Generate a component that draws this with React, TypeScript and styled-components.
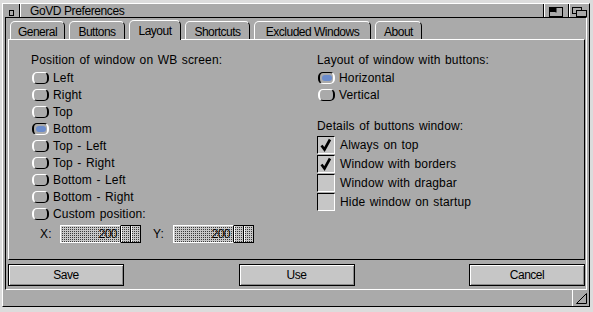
import React from "react";
import styled, { createGlobalStyle } from "styled-components";

const GlobalStyle = createGlobalStyle`
  html, body {
    margin: 0;
    padding: 0;
    background: #dcdcdc;
  }
  body {
    font-family: "Liberation Sans", Arial, sans-serif;
    font-size: 12px;
    color: #000;
  }
  #root {
    width: 593px;
    height: 312px;
    overflow: hidden;
  }
`;

const GRAY = "#aaaaaa";
const dots = `
  background-color: #c8c8c8;
  background-image: conic-gradient(from 90deg at 1px 1px, #3a3a3a 90deg, transparent 0);
  background-size: 2px 2px;
`;

const Screen = styled.div`
  width: 593px;
  height: 312px;
  padding: 3px 0 0 2px;
  box-sizing: border-box;
`;

const Window = styled.div`
  width: 588px;
  height: 304px;
  box-sizing: border-box;
  background: ${GRAY};
  border-style: solid;
  border-width: 1px;
  border-color: #fff #000 #000 #fff;
  display: flex;
  flex-direction: column;
`;

const TitleBar = styled.div`
  height: 13px;
  display: flex;
  align-items: stretch;
`;

const CloseGadget = styled.div`
  width: 17px;
  border-right: 1px solid #000;
  box-shadow: 1px 0 0 #fff;
  display: flex;
  align-items: center;
  justify-content: center;
  padding-top: 4px;
  box-sizing: border-box;
`;

const CloseIcon = styled.div`
  width: 5px;
  height: 6px;
  border: 1px solid #000;
  box-sizing: border-box;
`;

const Title = styled.div`
  flex: 1;
  padding-left: 10px;
  font-size: 12px;
  letter-spacing: -0.4px;
  line-height: 14px;
`;

const Gadget = styled.div<{ $w: number }>`
  width: ${(p) => p.$w}px;
  border-left: 1px solid #000;
  box-shadow: inset 1px 0 0 #fff;
  display: flex;
  align-items: center;
  justify-content: center;
  padding-top: 3px;
`;

const Frame = styled.div`
  margin-left: 2px;
  width: 582px;
  height: 273px;
  box-sizing: border-box;
  border-style: solid;
  border-width: 1px;
  border-color: #000 #fff #fff #000;
  padding: 2px 1px 3px 2px;
  display: flex;
  flex-direction: column;
`;

const TabRow = styled.div`
  height: 19px;
  display: flex;
  align-items: flex-end;
  gap: 4px;
  padding-left: 2px;
`;

const Tab = styled.div<{ $w: number; $active?: boolean }>`
  position: relative;
  z-index: ${(p) => (p.$active ? 1 : 0)};
  width: ${(p) => p.$w}px;
  height: ${(p) => (p.$active ? 20 : 18)}px;
  margin-bottom: ${(p) => (p.$active ? -1 : 0)}px;
  box-sizing: border-box;
  border-style: solid;
  border-width: 1px 1px 0 1px;
  border-color: #fff #000 transparent #fff;
  border-radius: 5px 5px 0 0;
  background: ${GRAY};
  display: flex;
  align-items: center;
  justify-content: center;
  padding-top: ${(p) => (p.$active ? 1 : 2)}px;
  font-size: 12px;
  letter-spacing: -0.5px;
`;

const Panel = styled.div`
  height: 221px;
  box-sizing: border-box;
  border-style: solid;
  border-width: 1px;
  border-color: #fff #000 #000 #fff;
  padding: 12px 0 0 22px;
  display: grid;
  grid-template-columns: 286px 1fr;
  align-items: start;
  letter-spacing: 0.15px;
`;

const Column = styled.div`
  display: flex;
  flex-direction: column;
`;

const Heading = styled.div<{ $gap?: number }>`
  height: 17px;
  line-height: 17px;
  margin-top: ${(p) => p.$gap ?? 0}px;
  word-spacing: 1px;
  white-space: nowrap;
`;

const Row = styled.div<{ $h: number }>`
  height: ${(p) => p.$h}px;
  display: flex;
  align-items: center;
  gap: 4px;
  word-spacing: 1px;
  white-space: nowrap;
`;

const RadioBox = styled.div<{ $on?: boolean }>`
  width: 17px;
  height: 12px;
  margin-left: 1px;
  box-sizing: border-box;
  border-radius: 5px;
  border-style: solid;
  border-width: 1px 2px;
  border-color: ${(p) => (p.$on ? "#000 #fff #fff #000" : "#fff #000 #000 #fff")};
  display: flex;
  align-items: center;
  justify-content: center;
`;

const RadioDot = styled.div`
  width: 10px;
  height: 6px;
  border-radius: 3px;
  background: #6b8ccc;
`;

const CheckBox = styled.div`
  width: 18px;
  height: 18px;
  margin-right: 1px;
  box-sizing: border-box;
  background: #c6c6c6;
  border-style: solid;
  border-width: 1px;
  border-color: #000 #fff #fff #000;
  display: flex;
  align-items: center;
  justify-content: center;
`;

const CoordRow = styled.div`
  margin-top: 3px;
  height: 18px;
  display: flex;
  align-items: center;
  padding-left: 9px;
`;

const CoordLabel = styled.span`
  width: 20px;
`;

const Slider = styled.div`
  display: flex;
  height: 18px;
  margin-right: 12px;
`;

const SliderField = styled.div`
  width: 61px;
  box-sizing: border-box;
  border-style: solid;
  border-width: 1px;
  border-color: #fff #000 #fff #fff;
  ${dots}
  text-align: right;
  padding-right: 3px;
  line-height: 16px;
  font-size: 12px;
  letter-spacing: -0.5px;
`;

const SliderKnob = styled.div`
  width: 10px;
  box-sizing: border-box;
  border: 1px solid #000;
  border-left-width: 0;
  box-shadow: inset 1px 0 0 #fff;
  ${dots}
`;

const ButtonRow = styled.div`
  margin-top: 4px;
  height: 22px;
  display: flex;
  justify-content: space-between;
`;

const Button = styled.div`
  width: 116px;
  box-sizing: border-box;
  border: 1px solid #000;
  box-shadow: inset 1px 1px 0 #fff, inset -1px -1px 0 #8a8a8a;
  background: #c6c6c6;
  display: flex;
  align-items: center;
  justify-content: center;
  font-size: 12px;
  letter-spacing: -0.5px;
`;

const BottomBar = styled.div`
  flex: 1;
  display: flex;
  justify-content: flex-end;
`;

const SizeGadget = styled.div`
  width: 16px;
  border-left: 1px solid #fff;
  display: flex;
  align-items: center;
  justify-content: center;
`;

const Radio = ({ label, on }: { label: string; on?: boolean }) => (
  <Row $h={17}>
    <RadioBox $on={on}>{on && <RadioDot />}</RadioBox>
    {label}
  </Row>
);

const Check = ({ label, on }: { label: string; on?: boolean }) => (
  <Row $h={19}>
    <CheckBox>
      {on && (
        <svg width="14" height="14" viewBox="0 0 14 14">
          <path d="M2.5 7.5 L5.5 11.5 L11 1.5" fill="none" stroke="#000" strokeWidth="2.6" />
        </svg>
      )}
    </CheckBox>
    {label}
  </Row>
);

const Coord = ({ label, value }: { label: string; value: number }) => (
  <>
    <CoordLabel>{label}</CoordLabel>
    <Slider>
      <SliderField>{value}</SliderField>
      <SliderKnob />
      <SliderKnob />
    </Slider>
  </>
);

const tabs = [
  { name: "General", w: 55 },
  { name: "Buttons", w: 56 },
  { name: "Layout", w: 52, active: true },
  { name: "Shortcuts", w: 65 },
  { name: "Excluded Windows", w: 117 },
  { name: "About", w: 47 },
];

const positions = [
  "Left",
  "Right",
  "Top",
  "Bottom",
  "Top - Left",
  "Top - Right",
  "Bottom - Left",
  "Bottom - Right",
  "Custom position:",
];

export default function App() {
  return (
    <Screen>
      <GlobalStyle />
      <Window>
        <TitleBar>
          <CloseGadget>
            <CloseIcon />
          </CloseGadget>
          <Title>GoVD Preferences</Title>
          <Gadget $w={24}>
            <svg width="14" height="10" viewBox="0 0 14 10">
              <rect x="0.5" y="0.5" width="13" height="9" fill="none" stroke="#000" />
              <rect x="1" y="1" width="6" height="4" fill="#000" />
              <rect x="6.5" y="0.5" width="1" height="5" fill="#000" />
            </svg>
          </Gadget>
          <Gadget $w={20}>
            <svg width="15" height="10" viewBox="0 0 15 10">
              <rect x="0.5" y="0.5" width="9" height="6" fill="none" stroke="#000" />
              <rect x="4.5" y="3.5" width="10" height="6" fill={GRAY} stroke="#000" />
            </svg>
          </Gadget>
        </TitleBar>
        <Frame>
          <TabRow>
            {tabs.map((t) => (
              <Tab key={t.name} $w={t.w} $active={t.active}>
                {t.name}
              </Tab>
            ))}
          </TabRow>
          <Panel>
            <Column>
              <Heading>Position of window on WB screen:</Heading>
              {positions.map((p) => (
                <Radio key={p} label={p} on={p === "Bottom"} />
              ))}
              <CoordRow>
                <Coord label="X:" value={200} />
                <Coord label="Y:" value={200} />
              </CoordRow>
            </Column>
            <Column>
              <Heading>Layout of window with buttons:</Heading>
              <Radio label="Horizontal" on />
              <Radio label="Vertical" />
              <Heading $gap={15}>Details of buttons window:</Heading>
              <Check label="Always on top" on />
              <Check label="Window with borders" on />
              <Check label="Window with dragbar" />
              <Check label="Hide window on startup" />
            </Column>
          </Panel>
          <ButtonRow>
            <Button>Save</Button>
            <Button>Use</Button>
            <Button>Cancel</Button>
          </ButtonRow>
        </Frame>
        <BottomBar>
          <SizeGadget>
            <svg width="11" height="11" viewBox="0 0 11 11">
              <path d="M0.5 10.5 L10.5 10.5 L10.5 0.5 Z" fill="none" stroke="#000" />
            </svg>
          </SizeGadget>
        </BottomBar>
      </Window>
    </Screen>
  );
}
